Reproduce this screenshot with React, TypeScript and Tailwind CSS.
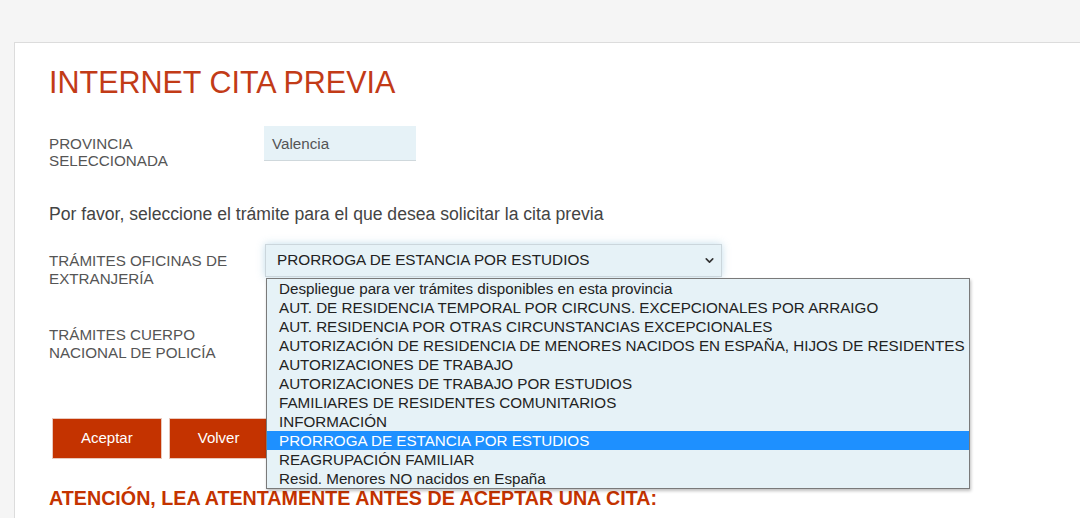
import { ChevronDown } from "lucide-react";

// ─── OPTIONS ──────────────────────────────────────────────────────────────────
const TRAMITES = [
  "Despliegue para ver trámites disponibles en esta provincia",
  "AUT. DE RESIDENCIA TEMPORAL POR CIRCUNS. EXCEPCIONALES POR ARRAIGO",
  "AUT. RESIDENCIA POR OTRAS CIRCUNSTANCIAS EXCEPCIONALES",
  "AUTORIZACIÓN DE RESIDENCIA DE MENORES NACIDOS EN ESPAÑA, HIJOS DE RESIDENTES",
  "AUTORIZACIONES DE TRABAJO",
  "AUTORIZACIONES DE TRABAJO POR ESTUDIOS",
  "FAMILIARES DE RESIDENTES COMUNITARIOS",
  "INFORMACIÓN",
  "PRORROGA DE ESTANCIA POR ESTUDIOS",
  "REAGRUPACIÓN FAMILIAR",
  "Resid. Menores NO nacidos en España",
];
const SELECTED = "PRORROGA DE ESTANCIA POR ESTUDIOS";

export default function App() {
  return (
    <div
      className="min-h-screen bg-[#f5f5f5] pt-[42px] pl-[14px] overflow-hidden"
      style={{ fontFamily: "'Liberation Sans', Arial, sans-serif" }}
    >
      <div className="bg-white border border-r-0 border-[#dcdcdc] pl-[34px] pt-[22px] h-[500px]">
        <h1 className="text-[30.5px] leading-[35px] text-[#c23b17]">INTERNET CITA PREVIA</h1>

        {/* Provincia */}
        <div className="flex mt-[26px]">
          <div className="w-[215px] pt-[9px] text-[15.2px] leading-[17px] text-[#555]">
            PROVINCIA
            <br />
            SELECCIONADA
          </div>
          <div className="w-[152px] h-[35px] bg-[#e6f2f7] border-b border-[#cfd8dc] px-[8px] text-[15.2px] leading-[35px] text-[#555]">
            Valencia
          </div>
        </div>

        <p className="mt-[35px] text-[17.6px] leading-[20px] text-[#444]">
          Por favor, seleccione el trámite para el que desea solicitar la cita previa
        </p>

        {/* Trámites extranjería */}
        <div className="flex mt-[20px]">
          <div className="w-[216px] pt-[8px] text-[15.2px] leading-[18px] text-[#555]">
            TRÁMITES OFICINAS DE
            <br />
            EXTRANJERÍA
          </div>
          <div className="relative">
            <div className="w-[457px] h-[33px] flex items-center justify-between pl-[11px] pr-[5px] bg-[#e6f2f7] border border-[#cbd6dc] shadow-[0_0_8px_rgba(120,180,210,0.45)] text-[15.3px] text-[#222]">
              <span>{SELECTED}</span>
              <ChevronDown size={13} strokeWidth={3} className="text-[#333]" />
            </div>
            {/* open list */}
            <ul className="absolute left-[1px] top-[34px] w-[704px] z-10 bg-[#e6f2f7] border border-[#7a7a7a] shadow-[1px_2px_3px_rgba(0,0,0,0.25)] text-[15.2px] leading-[19px] text-[#222]">
              {TRAMITES.map((t) => (
                <li
                  key={t}
                  className={
                    t === SELECTED
                      ? "pl-[12px] whitespace-nowrap bg-[#1e90ff] text-white"
                      : "pl-[12px] whitespace-nowrap"
                  }
                >
                  {t}
                </li>
              ))}
            </ul>
          </div>
        </div>

        {/* Trámites policía */}
        <div className="flex mt-[38px]">
          <div className="w-[216px] text-[15.2px] leading-[18px] text-[#555]">
            TRÁMITES CUERPO
            <br />
            NACIONAL DE POLICÍA
          </div>
        </div>

        {/* Buttons */}
        <div className="flex gap-[7px] mt-[56px] ml-[3px]">
          <button className="h-[41px] px-[28px] bg-[#c43300] border border-[#e9c9bd] text-white text-[15px]">
            Aceptar
          </button>
          <button className="h-[41px] px-[28px] bg-[#c43300] border border-[#e9c9bd] text-white text-[15px]">
            Volver
          </button>
        </div>

        <h2 className="mt-[28px] text-[19.7px] leading-[22px] font-bold text-[#c43300]">
          ATENCIÓN, LEA ATENTAMENTE ANTES DE ACEPTAR UNA CITA:
        </h2>
      </div>
    </div>
  );
}
